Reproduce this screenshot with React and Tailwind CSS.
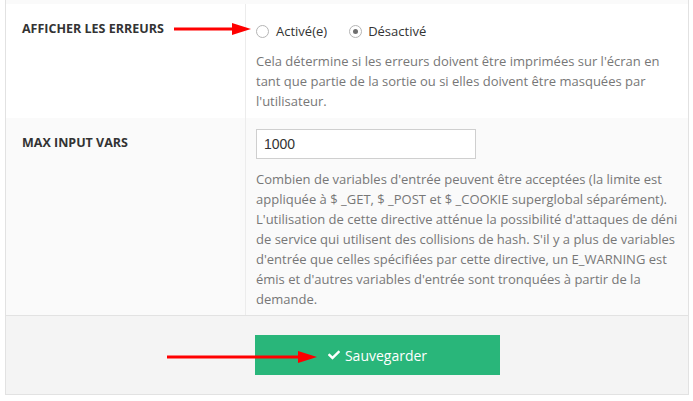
import { FaCheck } from 'react-icons/fa';

const font = { fontFamily: '"Open Sans", "Noto Sans", sans-serif' };

function Radio({ checked }) {
  return (
    <span className="flex h-[13px] w-[13px] items-center justify-center rounded-full border border-[#b5b5b5] bg-white">
      {checked && <span className="h-[5px] w-[5px] rounded-full bg-[#6f6f6f]" />}
    </span>
  );
}

function Arrow({ className, width }) {
  return (
    <svg className={`pointer-events-none absolute ${className}`} width={width} height="14" viewBox={`0 0 ${width} 14`}>
      <line x1="0" y1="7" x2={width - 16} y2="7" stroke="#ff0000" strokeWidth="3" />
      <polygon points={`${width - 19},1 ${width},7 ${width - 19},13`} fill="#ff0000" />
    </svg>
  );
}

function Row({ label, children, bg }) {
  return (
    <div className={`grid grid-cols-[240px_1fr] ${bg}`}>
      <div className="border-r border-[#ececec] pl-4 pt-[15px] text-[12.5px] font-bold uppercase leading-[20px] text-[#333]">
        {label}
      </div>
      <div className="pl-[10px] pr-[3px]">{children}</div>
    </div>
  );
}

export default function App() {
  return (
    <div className="relative h-[401px] w-[693px] bg-white" style={font}>
      <div className="ml-[5px] w-[684px] border-x border-b border-[#e2e2e2]">
        <div className="h-[4px] bg-[#fafafa]" />

        <Row label="Afficher les erreurs" bg="bg-white">
          <div className="flex items-center pt-[17px] text-[13px] leading-[20px] text-[#333]">
            <label className="flex items-center gap-[7px]">
              <Radio />
              <span>Activé(e)</span>
            </label>
            <label className="ml-[22px] flex items-center gap-[6px]">
              <Radio checked />
              <span>Désactivé</span>
            </label>
          </div>
          <p className="pb-[7px] pt-[10px] text-[13px] leading-[20px] text-[#777]">
            Cela détermine si les erreurs doivent être imprimées sur l'écran en tant que partie de la sortie ou si elles doivent être masquées par l'utilisateur.
          </p>
        </Row>

        <Row label="Max input vars" bg="bg-[#fafafa]">
          <div className="pt-[11px]">
            <div
              className="flex h-[30px] w-[220px] items-center border border-[#cfcfcf] bg-white pl-[7px] text-[14px] text-[#333]"
              style={{ fontFamily: '"Liberation Sans", Arial, sans-serif' }}
            >
              1000
            </div>
          </div>
          <p className="pb-[6px] pt-[10px] text-[13px] leading-[20px] text-[#777]">
            Combien de variables d'entrée peuvent être acceptées (la limite est appliquée à $ _GET, $ _POST et $ _COOKIE superglobal séparément). L'utilisation de cette directive atténue la possibilité d'attaques de déni de service qui utilisent des collisions de hash. S'il y a plus de variables d'entrée que celles spécifiées par cette directive, un E_WARNING est émis et d'autres variables d'entrée sont tronquées à partir de la demande.
          </p>
        </Row>

        <div className="grid grid-cols-[240px_1fr] border-t border-[#e2e2e2] bg-[#f4f4f4] pb-[19px] pt-[19px]">
          <div />
          <div className="pl-[9px]">
            <button className="flex h-[40px] w-[245px] items-center justify-center gap-[5px] bg-[#29b67a] text-[14px] text-white">
              <FaCheck className="h-[12px] w-[12px]" />
              <span>Sauvegarder</span>
            </button>
          </div>
        </div>
      </div>

      <Arrow className="left-[174px] top-[22px]" width={77} />
      <Arrow className="left-[167px] top-[350px]" width={150} />
    </div>
  );
}
